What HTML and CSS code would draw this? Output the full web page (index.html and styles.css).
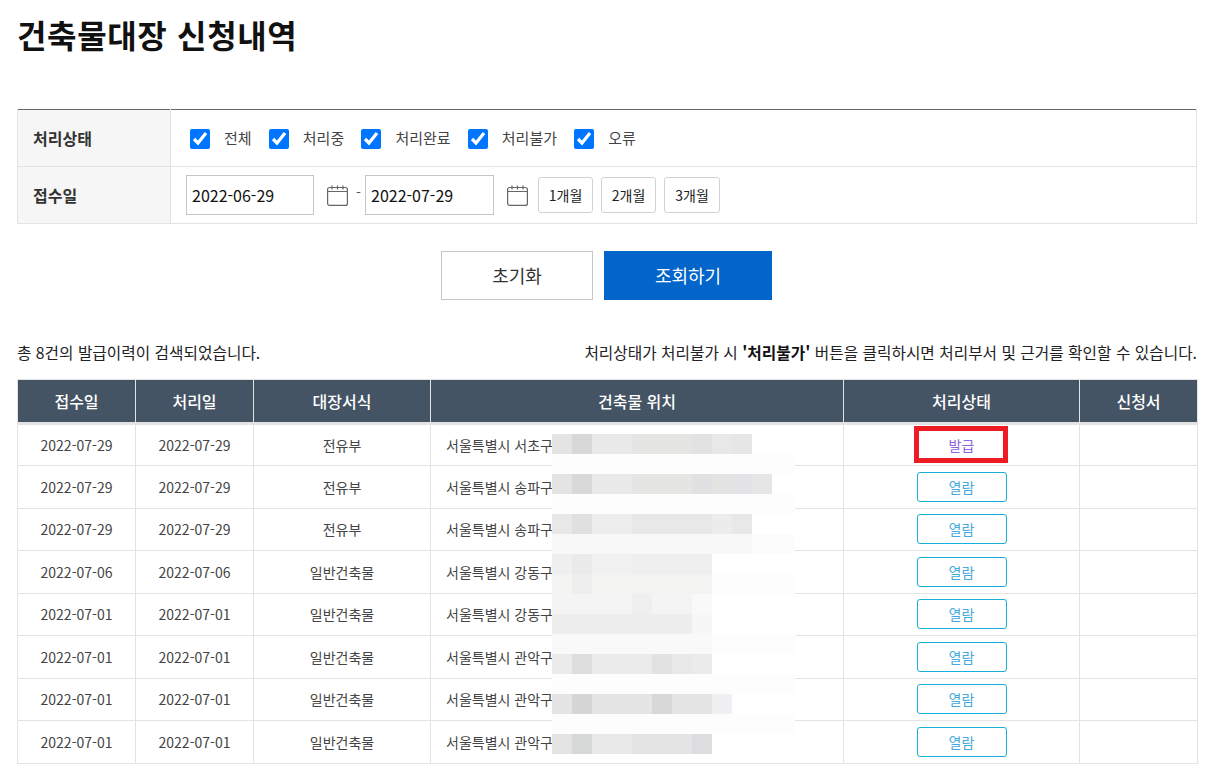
FILE: index.html
```html
<!DOCTYPE html>
<html lang="ko">
<head>
<meta charset="utf-8">
<title>건축물대장 신청내역</title>
<link rel="stylesheet" href="styles.css">
</head>
<body>
<main class="page">
  <h1 class="title">건축물대장 신청내역</h1>

  <table class="filter">
    <tbody>
      <tr>
        <th>처리상태</th>
        <td>
          <div class="checks">
            <label class="check"><input type="checkbox" checked><span>전체</span></label>
            <label class="check"><input type="checkbox" checked><span>처리중</span></label>
            <label class="check"><input type="checkbox" checked><span>처리완료</span></label>
            <label class="check"><input type="checkbox" checked><span>처리불가</span></label>
            <label class="check"><input type="checkbox" checked><span>오류</span></label>
          </div>
        </td>
      </tr>
      <tr>
        <th>접수일</th>
        <td>
          <div class="dates">
            <input class="date" type="text" value="2022-06-29">
            <svg class="cal" viewBox="0 0 21 21" fill="none" stroke="#666" stroke-width="1.200"><rect x="0.600" y="2.500" width="19.800" height="17.900" rx="2"/><path d="M0.600 6.500h19.800M5 0.500v4M10.500 0.500v4M16 0.500v4"/></svg>
            <span class="dash">-</span>
            <input class="date date-to" type="text" value="2022-07-29">
            <svg class="cal" viewBox="0 0 21 21" fill="none" stroke="#666" stroke-width="1.200"><rect x="0.600" y="2.500" width="19.800" height="17.900" rx="2"/><path d="M0.600 6.500h19.800M5 0.500v4M10.500 0.500v4M16 0.500v4"/></svg>
            <button class="month" type="button">1개월</button>
            <button class="month" type="button">2개월</button>
            <button class="month" type="button">3개월</button>
          </div>
        </td>
      </tr>
    </tbody>
  </table>

  <div class="actions">
    <button class="btn-reset" type="button">초기화</button>
    <button class="btn-search" type="button">조회하기</button>
  </div>

  <div class="summary">
    <p>총 8건의 발급이력이 검색되었습니다.</p>
    <p>처리상태가 처리불가 시 <strong>'처리불가'</strong> 버튼을 클릭하시면 처리부서 및 근거를 확인할 수 있습니다.</p>
  </div>

  <div class="result">
    <table class="list">
      <colgroup>
        <col class="c-date"><col class="c-date"><col class="c-form"><col class="c-addr"><col class="c-status"><col class="c-doc">
      </colgroup>
      <thead>
        <tr><th>접수일</th><th>처리일</th><th>대장서식</th><th>건축물 위치</th><th>처리상태</th><th>신청서</th></tr>
      </thead>
      <tbody>
        <tr><td>2022-07-29</td><td>2022-07-29</td><td>전유부</td><td class="addr">서울특별시 서초구</td><td><span class="issued">발급</span></td><td></td></tr>
        <tr><td>2022-07-29</td><td>2022-07-29</td><td>전유부</td><td class="addr">서울특별시 송파구</td><td><a class="view">열람</a></td><td></td></tr>
        <tr><td>2022-07-29</td><td>2022-07-29</td><td>전유부</td><td class="addr">서울특별시 송파구</td><td><a class="view">열람</a></td><td></td></tr>
        <tr><td>2022-07-06</td><td>2022-07-06</td><td>일반건축물</td><td class="addr">서울특별시 강동구</td><td><a class="view">열람</a></td><td></td></tr>
        <tr><td>2022-07-01</td><td>2022-07-01</td><td>일반건축물</td><td class="addr">서울특별시 강동구</td><td><a class="view">열람</a></td><td></td></tr>
        <tr><td>2022-07-01</td><td>2022-07-01</td><td>일반건축물</td><td class="addr">서울특별시 관악구</td><td><a class="view">열람</a></td><td></td></tr>
        <tr><td>2022-07-01</td><td>2022-07-01</td><td>일반건축물</td><td class="addr">서울특별시 관악구</td><td><a class="view">열람</a></td><td></td></tr>
        <tr><td>2022-07-01</td><td>2022-07-01</td><td>일반건축물</td><td class="addr">서울특별시 관악구</td><td><a class="view">열람</a></td><td></td></tr>
      </tbody>
    </table>

    <svg class="mosaic" width="243" height="320" viewBox="0 0 243 320" shape-rendering="crispEdges">
      <rect y="0" width="200" height="20" fill="#e6e6e6"/>
      <rect x="0" y="0" width="20" height="20" fill="#e4e4e4"/><rect x="20" y="0" width="20" height="20" fill="#d8d8d8"/><rect x="40" y="0" width="40" height="20" fill="#e9e9e9"/><rect x="80" y="0" width="60" height="20" fill="#e5e5e3"/><rect x="140" y="0" width="20" height="20" fill="#e2e2e4"/><rect x="160" y="0" width="20" height="20" fill="#e8e8e8"/>
      <rect y="20" width="243" height="20" fill="#fdfdfd"/>
      <rect y="40" width="220" height="20" fill="#e6e6e6"/>
      <rect x="0" y="40" width="20" height="20" fill="#e4e4e4"/><rect x="20" y="40" width="20" height="20" fill="#d9d9d9"/><rect x="40" y="40" width="40" height="20" fill="#e9e9e9"/><rect x="80" y="40" width="60" height="20" fill="#e5e5e3"/><rect x="140" y="40" width="20" height="20" fill="#e1e1e3"/><rect x="160" y="40" width="20" height="20" fill="#e3e3e1"/><rect x="180" y="40" width="20" height="20" fill="#e3e3e5"/>
      <rect y="60" width="243" height="20" fill="#fdfdfd"/>
      <rect y="80" width="200" height="20" fill="#e8e8e8"/>
      <rect x="20" y="80" width="20" height="20" fill="#e0e0e0"/><rect x="40" y="80" width="40" height="20" fill="#ededed"/><rect x="160" y="80" width="20" height="20" fill="#ececec"/>
      <rect y="100" width="243" height="20" fill="#fcfcfc"/>
      <rect y="100" width="200" height="20" fill="#f8f8f8"/>
      <rect y="120" width="160" height="20" fill="#efefef"/>
      <rect x="20" y="120" width="20" height="20" fill="#eaeaea"/><rect x="40" y="120" width="40" height="20" fill="#f1f1f1"/>
      <rect y="140" width="243" height="20" fill="#fdfdfd"/>
      <rect y="140" width="160" height="20" fill="#f3f3f2"/>
      <rect x="20" y="140" width="20" height="20" fill="#eeeeee"/>
      <rect y="160" width="160" height="20" fill="#f4f4f4"/>
      <rect x="80" y="160" width="20" height="20" fill="#efefef"/><rect x="140" y="160" width="20" height="20" fill="#f9f9f9"/>
      <rect y="180" width="160" height="20" fill="#ededed"/>
      <rect x="140" y="180" width="20" height="20" fill="#f7f7f7"/>
      <rect y="200" width="243" height="20" fill="#fdfdfd"/>
      <rect y="200" width="160" height="20" fill="#f9f9f9"/>
      <rect y="220" width="160" height="20" fill="#ebebeb"/>
      <rect x="20" y="220" width="20" height="20" fill="#dddddd"/><rect x="100" y="220" width="20" height="20" fill="#e2e2e2"/><rect x="120" y="220" width="20" height="20" fill="#e8e8e8"/>
      <rect y="240" width="243" height="20" fill="#fdfdfd"/>
      <rect y="260" width="180" height="20" fill="#e5e5e5"/>
      <rect x="20" y="260" width="20" height="20" fill="#d6d6d6"/><rect x="100" y="260" width="20" height="20" fill="#d8d8d8"/><rect x="160" y="260" width="20" height="20" fill="#f0f0f2"/>
      <rect y="280" width="243" height="20" fill="#fdfdfd"/>
      <rect y="300" width="160" height="20" fill="#e4e4e4"/>
      <rect x="20" y="300" width="20" height="20" fill="#d7d8d8"/><rect x="40" y="300" width="40" height="20" fill="#e8e8e8"/><rect x="140" y="300" width="20" height="20" fill="#dddddf"/>
    </svg>
    <div class="highlight"></div>
  </div>
</main>
</body>
</html>
```
FILE: styles.css
```css
* { box-sizing: border-box; }
html, body { margin: 0; padding: 0; background: #fff; }
body {
  font-family: "Noto Sans CJK KR", "Noto Sans", sans-serif;
  color: #222;
  overflow: hidden;
}
.page { width: 1222px; height: 784px; padding: 0 25px 0 17px; }
.title {
  margin: 0;
  padding-top: 11px;
  height: 109px;
  font-size: 32px;
  line-height: 46px;
  font-weight: 700;
  color: #111;
  letter-spacing: 0.65px;
}

.filter {
  width: 1180px;
  border-collapse: collapse;
  table-layout: fixed;
  border-top: 1px solid #666;
}
.filter th, .filter td { border: 1px solid #e3e3e3; padding: 0; height: 57px; }
.filter tr:first-child th, .filter tr:first-child td { border-top: 0; height: 57px; }
.filter th {
  width: 153px;
  background: #f6f6f6;
  text-align: left;
  padding-left: 15px;
  font-size: 16px;
  font-weight: 700;
  color: #333;
}
.checks { display: flex; align-items: center; padding-left: 19px; gap: 17.200px; }
.check { display: flex; align-items: center; gap: 14px; color: #444; font-size: 15px; }
.check input { width: 20px; height: 20px; margin: 2px 0 0; }
.check span { margin-top: -2px; }
.dates { display: flex; align-items: center; padding-left: 15px; }
.date {
  width: 128px;
  height: 40px;
  margin: 0;
  padding: 0 5px;
  border: 1px solid #c6c6c6;
  border-radius: 0;
  font: 16px "Noto Sans CJK KR", sans-serif;
  color: #111;
}
.date-to { width: 129px; }
.cal { width: 21px; height: 21px; margin: 0 0 0 13px; flex: none; }
.dash { width: 17px; padding-left: 8px; font-size: 14px; color: #555; line-height: 1; position: relative; top: -3px; }
.date-to + .cal { margin-right: 10px; }
.month {
  height: 36px;
  width: 55px;
  margin: 0 8px 0 0;
  padding: 0;
  background: #fff;
  border: 1px solid #d2d2d2;
  border-radius: 3px;
  font: 14px "Noto Sans CJK KR", sans-serif;
  color: #222;
}
.month:last-child { width: 56px; margin-right: 0; }

.actions { display: flex; justify-content: center; gap: 11px; padding: 27px 0 0 0; margin-left: -1px; }
.btn-reset, .btn-search {
  height: 49px;
  padding: 0 0 2px;
  border-radius: 0;
  font: 18px "Noto Sans CJK KR", sans-serif;
}
.btn-reset { width: 152px; background: #fff; border: 1px solid #c6c6c6; color: #333; }
.btn-search { width: 168px; background: #0364c9; border: 0; color: #fff; }

.summary {
  display: flex;
  justify-content: space-between;
  align-items: center;
  height: 24px;
  margin-top: 40px;
  font-size: 15.730px;
  color: #222;
}
.summary p { margin: 0; }
.summary strong { color: #111; font-weight: 700; }

.result { position: relative; margin-top: 15px; width: 1180px; }
.list {
  width: 1180px;
  border-collapse: collapse;
  table-layout: fixed;
  font-size: 14px;
  color: #444;
}
.c-date { width: 118px; }
.c-form { width: 177px; }
.c-addr { width: 413px; }
.c-status { width: 236px; }
.c-doc { width: 118px; }
.list thead th {
  height: 43.500px;
  background: #445464;
  color: #fff;
  font-size: 16px;
  font-weight: 500;
  border: 1px solid #e3e3e3;
  border-bottom: 3px solid #e3e3e3;
  padding: 0;
}
.list tbody td {
  height: 42.500px;
  padding: 0;
  text-align: center;
  border: 1px solid #e3e3e3;
}
.list td.addr { text-align: left; padding-left: 15px; white-space: nowrap; }
.view, .issued {
  display: block;
  width: 90px;
  height: 30px;
  margin: 0 auto;
  line-height: 28px;
  font-size: 14px;
  border-radius: 3px;
}
.view { border: 1px solid #18b0d8; color: #45a9dc; }
.issued { border: 1px solid #fff; color: #8f66dc; }

.mosaic { position: absolute; left: 535px; top: 55px; }
.highlight {
  position: absolute;
  left: 897px;
  top: 47px;
  width: 94px;
  height: 37px;
  border: 5px solid #ed1c24;
}
```
